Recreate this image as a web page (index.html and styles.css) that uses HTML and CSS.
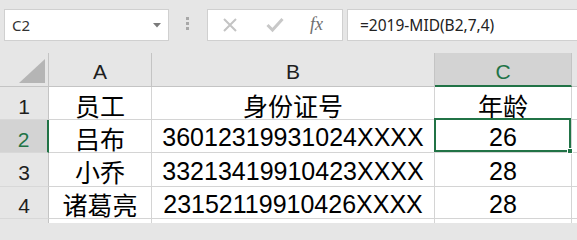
FILE: index.html
```html
<!DOCTYPE html>
<html lang="zh-CN">
<head>
<meta charset="utf-8">
<title>Excel</title>
<link rel="stylesheet" href="styles.css">
</head>
<body>
<div class="toolbar">
  <div class="namebox">
    <span class="name">C2</span>
    <svg class="arrow" width="8" height="5" viewBox="0 0 8 5"><polygon points="0,0 8,0 4,4.5" fill="#7a7a7a"/></svg>
  </div>
  <div class="grip"><i></i><i></i><i></i></div>
  <div class="fxgroup">
    <svg class="ico" width="16" height="16" viewBox="0 0 16 16"><path d="M2 2 L14 14 M14 2 L2 14" stroke="#c4c4c4" stroke-width="2" fill="none"/></svg>
    <svg class="ico" width="18" height="16" viewBox="0 0 18 16"><path d="M1.5 8 L6.5 13 L16.5 2" stroke="#c8c8c8" stroke-width="3" fill="none"/></svg>
    <span class="fx">fx</span>
  </div>
  <div class="formula">=2019-MID(B2,7,4)</div>
</div>
<div class="sheet">
  <div class="hd corner"><svg width="48" height="33" viewBox="0 0 48 33"><polygon points="45,6 45,30 19,30" fill="#b5b5b5"/></svg></div>
  <div class="hd col">A</div>
  <div class="hd col">B</div>
  <div class="hd col sel-col">C</div>
  <div class="hd col last"></div>

  <div class="hd row">1</div>
  <div class="cell">员工</div>
  <div class="cell">身份证号</div>
  <div class="cell">年龄</div>
  <div class="cell last"></div>

  <div class="hd row sel-row">2</div>
  <div class="cell">吕布</div>
  <div class="cell">36012319931024XXXX</div>
  <div class="cell active">26<span class="handle"></span></div>
  <div class="cell last"></div>

  <div class="hd row">3</div>
  <div class="cell">小乔</div>
  <div class="cell">33213419910423XXXX</div>
  <div class="cell">28</div>
  <div class="cell last"></div>

  <div class="hd row">4</div>
  <div class="cell">诸葛亮</div>
  <div class="cell">23152119910426XXXX</div>
  <div class="cell">28</div>
  <div class="cell last"></div>

  <div class="hd row"></div>
  <div class="cell"></div>
  <div class="cell"></div>
  <div class="cell"></div>
  <div class="cell last"></div>
</div>
</body>
</html>
```

FILE: styles.css
```css
* { box-sizing: border-box; }
html, body {
  margin: 0;
  padding: 0;
  width: 577px;
  height: 223px;
  overflow: hidden;
  background: #e6e6e6;
  font-family: "Liberation Sans", "Noto Sans CJK SC", sans-serif;
}
.toolbar {
  display: flex;
  align-items: flex-start;
  height: 53px;
  padding: 9px 0 0 4px;
  overflow: hidden;
}
.namebox {
  width: 165px;
  height: 32px;
  background: #fff;
  border: 1px solid #d0d0d0;
  display: flex;
  align-items: center;
  justify-content: space-between;
  padding: 0 7px 0 7px;
}
.name {
  font-family: "Noto Sans", sans-serif;
  font-size: 15px;
  color: #333;
  line-height: 1;
}
.arrow { display: block; margin-top: 1px; }
.grip {
  width: 3px;
  margin-left: 17px;
  margin-top: 8px;
  display: flex;
  flex-direction: column;
  gap: 2px;
}
.grip i {
  display: block;
  width: 3px;
  height: 3px;
  background: #a8a8a8;
}
.fxgroup {
  width: 136px;
  height: 32px;
  margin-left: 18px;
  background: #fff;
  border: 1px solid #d0d0d0;
  display: flex;
  align-items: center;
  padding-left: 14px;
}
.ico { display: block; }
.ico + .ico { margin-left: 28px; }
.fx {
  margin-left: 26px;
  font-family: "Liberation Serif", serif;
  font-style: italic;
  font-size: 18px;
  color: #6e6e6e;
  line-height: 1;
  margin-top: -2px;
}
.formula {
  flex: 1;
  height: 32px;
  margin-left: 4px;
  margin-right: -10px;
  background: #fff;
  border: 1px solid #d0d0d0;
  display: flex;
  align-items: center;
  padding-left: 12px;
  font-family: "Noto Sans", sans-serif;
  font-size: 15.5px;
  color: #222;
}
.sheet {
  display: grid;
  grid-template-columns: 49px 103px 283px 137px 1fr;
  grid-template-rows: 34px 33px 33px 34px 32px 1fr;
  height: 170px;
}
.hd {
  background: #e6e6e6;
  border-right: 1px solid #c4c4c4;
  border-bottom: 1px solid #c4c4c4;
  display: flex;
  justify-content: center;
  align-items: center;
  font-size: 21px;
  color: #1e1e1e;
  padding-top: 5px;
}
.hd.col.last { border-right: none; }
.hd.row { border-bottom-color: #d8d8d8; padding-top: 7px; }
.corner { padding: 0; display: block; }
.corner svg { display: block; }
.sel-col {
  background: #d3d3d3;
  color: #217346;
  border-bottom: 2px solid #217346;
}
.sel-row {
  background: #d3d3d3;
  color: #217346;
  border-right: 2px solid #217346;
}
.cell {
  background: #fff;
  border-right: 1px solid #d4d4d4;
  border-bottom: 1px solid #d4d4d4;
  display: flex;
  justify-content: center;
  align-items: center;
  font-size: 25px;
  color: #000;
  padding-top: 3px;
  white-space: nowrap;
  position: relative;
}
.cell.last { border-right: none; }
.active::after {
  content: "";
  position: absolute;
  top: -2px;
  left: -1px;
  right: 0;
  bottom: 0;
  border: 2px solid #217346;
}
.handle {
  position: absolute;
  right: -2px;
  bottom: -2px;
  width: 6px;
  height: 6px;
  background: #217346;
  border: 1px solid #fff;
  z-index: 2;
}
```
